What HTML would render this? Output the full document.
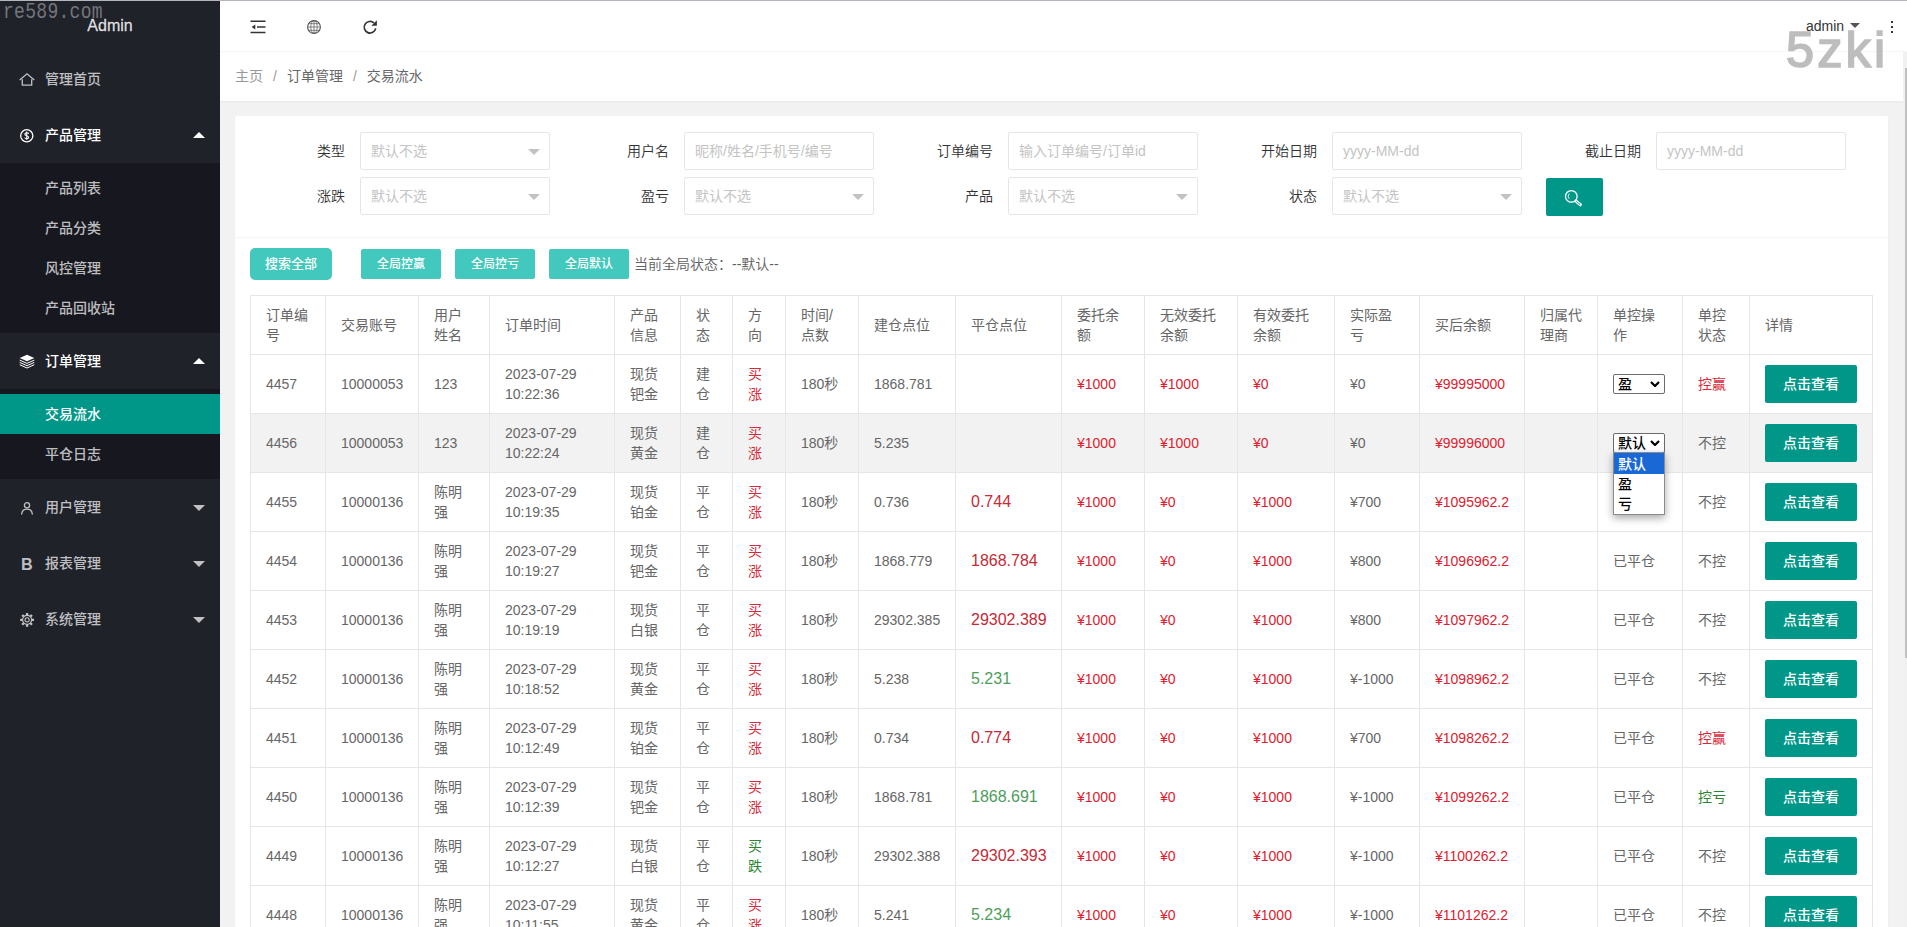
<!DOCTYPE html>
<html lang="zh-CN">
<head>
<meta charset="utf-8">
<title>交易流水</title>
<style>
*{box-sizing:border-box;margin:0;padding:0}
html,body{width:1907px;height:927px;overflow:hidden}
body{position:relative;background:#f2f2f2;color:#666;font:14px/20px "Liberation Sans","Noto Sans CJK SC",sans-serif;}
a{color:inherit;text-decoration:none}
ul{list-style:none}
.abs{position:absolute}
/* browser top hairline */
#topline{left:0;top:0;width:1907px;height:1px;background:#b4b5bd;z-index:50}
/* ---------- sidebar ---------- */
#side{left:0;top:1px;width:220px;height:926px;background:#20222a;color:rgba(255,255,255,.72);z-index:10;font-weight:500}
#logo{left:0;top:0;width:220px;height:50px;line-height:50px;text-align:center;font-size:16px;color:rgba(255,255,255,.85);-webkit-text-stroke:.300px rgba(255,255,255,.7)}
.nav-item{position:absolute;left:0;width:220px;height:56px;line-height:56px;padding-left:45px;font-size:14px}
.nav-item.open{color:#fff}
.nav-item svg.ic{position:absolute;left:19px;top:21px;width:16px;height:16px;overflow:visible}
.nav-item i.more{position:absolute;right:15px;top:26px;width:0;height:0;border:6px solid transparent;border-top-color:rgba(255,255,255,.72)}
.nav-item.open i.more{top:19px;border-top-color:transparent;border-bottom-color:#fff}
.nav-child{position:absolute;left:0;width:220px;background:#17181f;padding:5px 0}
.nav-child a{display:block;height:40px;line-height:40px;padding-left:45px;color:rgba(255,255,255,.72)}
.nav-child a.this{background:#009688;color:#fff}
/* ---------- header ---------- */
#header{left:220px;top:1px;width:1687px;height:51px;background:#fff;border-bottom:1px solid #f6f6f6;z-index:5}
#crumb{left:220px;top:51px;width:1683px;height:50px;background:#fff;line-height:50px;padding-left:15px;font-size:14px;color:#999;box-shadow:0 1px 2px 0 rgba(0,0,0,.05)}
#crumb span.sep{margin:0 10px;color:#999}
#crumb a.c{color:#666}
#crumb a.h{color:#999}
/* ---------- card ---------- */
#card{left:235px;top:116px;width:1653px;height:820px;background:#fff;border-radius:2px;box-shadow:0 1px 2px 0 rgba(0,0,0,.05)}
.lbl{position:absolute;width:110px;height:38px;line-height:38px;padding:0 15px;text-align:right;color:#333;font-size:14px;font-weight:350}
.inp{position:absolute;width:190px;height:38px;line-height:36px;border:1px solid #e6e6e6;border-radius:2px;background:#fff;padding-left:10px;color:#c4c4c4;font-size:14px}
.inp i{position:absolute;right:9px;top:16px;width:0;height:0;border:6px solid transparent;border-top-color:#c2c2c2}
#sbtn{left:1546px;top:178px;width:57px;height:38px;background:#009688;border-radius:2px}
#hr1{left:235px;top:237px;width:1653px;height:1px;background:#f6f6f6}
.b1{position:absolute;left:250px;top:248px;width:82px;height:32px;line-height:32px;border-radius:5px;background:#42c8bd;color:#fff;text-align:center;font-size:13px;font-weight:500}
.b2{position:absolute;top:249px;width:80px;height:30px;line-height:30px;border-radius:2px;background:#42c8bd;color:#fff;text-align:center;font-size:12px;font-weight:500}
#gstate{left:634px;top:249px;height:30px;line-height:30px;font-size:14px;color:#606060;font-weight:350}
/* ---------- table ---------- */
#tb{left:250px;top:295px;width:1623px;table-layout:fixed;border-collapse:separate;border-spacing:0;border-left:1px solid #e6e6e6;border-top:1px solid #e6e6e6;background:#fff;color:#666;font-size:14px;line-height:20px}
#tb th,#tb td{height:59px;padding:9px 15px;border-right:1px solid #e6e6e6;border-bottom:1px solid #e6e6e6;text-align:left;font-weight:400;vertical-align:middle;word-break:normal;overflow:visible}
#tb tr.hov td{background:#f2f2f2}
#tb .tr{color:#d62a38}
#tb .tg{color:#2a8430}
#tb .m{color:#e0202e}
#tb .pr{color:#c62a36;font-size:16px}
#tb .pg{color:#4d9e5c;font-size:16px}
.vbtn{display:inline-block;vertical-align:middle;width:92px;height:38px;line-height:38px;background:#009688;color:#fff;text-align:center;border-radius:2px;font-size:14px;font-weight:500}
.sel{display:inline-block;position:relative;top:-1px;vertical-align:middle;width:52px;height:20px;line-height:18px;border:1px solid #6b6b6b;border-radius:2px;background:#fff;color:#000;font-size:14px;font-weight:500;padding-left:4px}
.sel svg{position:absolute;right:4px;top:6px;width:10px;height:6px;fill:none;stroke:#000;stroke-width:2.200}
#dd{left:1613px;top:452px;width:52px;height:63px;background:#fff;border:1px solid #8c8c8c;box-shadow:0 3px 8px rgba(0,0,0,.35);color:#000;font-size:14px;font-weight:500;line-height:21px;z-index:20}
#dd div{height:20px;padding-left:4px}
#dd div.on{height:21px;line-height:22px;background:#1a68d6;color:#fff}
/* ---------- scrollbar + watermarks ---------- */
#sbar{left:1903px;top:52px;width:4px;height:875px;background:#f1f1f1}
#sthumb{left:1905px;top:68px;width:2px;height:590px;background:#c1c1c1}
#wm1{left:3px;top:-3px;font:18px/24px "Liberation Mono",monospace;color:#75767b;letter-spacing:.300px;z-index:30;transform:scaleY(1.220);transform-origin:left top}
#wm2{left:1786px;top:20px;font:normal 50.500px/60px "Liberation Sans",sans-serif;color:#bdbdbd;-webkit-text-stroke:1.700px #bdbdbd;z-index:40;letter-spacing:3.100px}
</style>
</head>
<body>
<div id="topline" class="abs"></div>

<!-- ================= SIDEBAR ================= -->
<div id="side" class="abs">
  <div id="logo" class="abs">Admin</div>

  <div class="nav-item" style="top:50px">
    <svg class="ic" viewBox="0 0 16 16" fill="none" stroke="currentColor" stroke-width="1.300" stroke-linejoin="miter" stroke-linecap="butt"><path d="M.7 8.100 8 1.800l7.300 6.300"/><path d="M3.300 7.200v5.900h9.400V7.200"/></svg>管理首页</div>

  <div class="nav-item open" style="top:106px">
    <svg class="ic" viewBox="0 0 16 16" fill="none" stroke="currentColor" stroke-width="1.300"><circle cx="7.750" cy="7.750" r="6.100"/><path d="M9.700 5.800C9.400 5.100 8.700 4.800 7.750 4.800c-1.150 0-1.900.600-1.900 1.400 0 1.900 3.800 1.100 3.800 3.100 0 .900-.750 1.450-1.900 1.450-1.050 0-1.800-.400-2.100-1.150M7.750 3.600v8.300" stroke-width="1.100"/></svg>产品管理<i class="more"></i></div>
  <div class="nav-child" style="top:162px">
    <a>产品列表</a><a>产品分类</a><a>风控管理</a><a>产品回收站</a>
  </div>

  <div class="nav-item open" style="top:332px">
    <svg class="ic" viewBox="0 0 16 16" fill="none" stroke="currentColor" stroke-width="1" stroke-linejoin="miter"><path d="M8 .700 15.300 4 8 7.300.700 4z" fill="currentColor" stroke="none"/><path d="M.700 6.100 8 9.400l7.300-3.300M.700 8.400 8 11.700l7.300-3.300M.700 10.700 8 14l7.300-3.300"/></svg>订单管理<i class="more"></i></div>
  <div class="nav-child" style="top:388px">
    <a class="this">交易流水</a><a>平仓日志</a>
  </div>

  <div class="nav-item" style="top:478px">
    <svg class="ic" viewBox="0 0 16 16" fill="none" stroke="currentColor" stroke-width="1.300" stroke-linecap="round"><circle cx="8" cy="5.300" r="2.600"/><path d="M2.700 14c.300-3 2.400-4.900 5.300-4.900s5 1.900 5.300 4.900"/></svg>用户管理<i class="more"></i></div>

  <div class="nav-item" style="top:534px">
    <svg class="ic" viewBox="0 0 16 16"><text x="1.900" y="13.600" font-family="Liberation Sans, sans-serif" font-weight="bold" font-size="16.200" fill="currentColor">B</text></svg>报表管理<i class="more"></i></div>

  <div class="nav-item" style="top:590px">
    <svg class="ic" viewBox="0 0 16 16" fill="none" stroke="currentColor"><g transform="translate(8.100 7.850)"><circle r="2.100" stroke-width="1.100"/><circle r="4.500" stroke-width="1.100"/><g stroke-width="2.300"><path d="M0-4.900v-2M0 4.900v2M-4.900 0h-2M4.900 0h2M-3.460-3.460l-1.420-1.420M3.460 3.460l1.420 1.420M-3.460 3.460l-1.420 1.420M3.460-3.460l1.420-1.420"/></g></g></svg>系统管理<i class="more"></i></div>
</div>

<!-- ================= HEADER ================= -->
<div id="header" class="abs">
  <!-- flexible / shrink icon -->
  <svg class="abs" style="left:30px;top:18px;width:16px;height:16px" viewBox="0 0 16 16" fill="none" stroke="#333" stroke-width="1.500"><path d="M.5 2.200h15M7 7.900h8.500M.5 13.600h15"/><path d="M5.300 5.400v5L1.600 7.900z" fill="#333" stroke="none"/></svg>
  <!-- globe -->
  <svg class="abs" style="left:86px;top:18px;width:16px;height:16px" viewBox="0 0 16 16" fill="none" stroke="#555" stroke-width=".700"><circle cx="8" cy="8" r="6.400" stroke-width="1.100"/><ellipse cx="8" cy="8" rx="3.200" ry="6.400"/><path d="M8 1.600v12.800M1.600 8h12.800M2.600 4.700h10.800M2.600 11.300h10.800"/></svg>
  <!-- refresh -->
  <svg class="abs" style="left:142px;top:18px;width:16px;height:16px" viewBox="0 0 16 16" fill="none" stroke="#333" stroke-width="1.700"><path d="M13.700 9.400A5.800 5.800 0 1 1 11.900 3.900"/><path d="M14.900 1.200v5.600H9.300z" fill="#333" stroke="none"/></svg>
  <div class="abs" style="left:1586px;top:0;height:50px;line-height:50px;font-size:14px;color:#333">admin</div>
  <i class="abs" style="left:1630px;top:22px;width:0;height:0;border:5.500px solid transparent;border-top-color:#555"></i>
  <div class="abs" style="left:1671px;top:20px;width:2px;height:2px;background:#333;box-shadow:0 5px 0 #333,0 10px 0 #333"></div>
</div>

<div id="crumb" class="abs"><a class="h">主页</a><span class="sep">/</span><a class="c">订单管理</a><span class="sep">/</span><a class="c">交易流水</a></div>

<!-- ================= CARD ================= -->
<div id="card" class="abs"></div>
<div id="hr1" class="abs"></div>

<div class="lbl" style="left:250px;top:132px">类型</div><div class="inp" style="left:360px;top:132px">默认不选<i></i></div>
<div class="lbl" style="left:574px;top:132px">用户名</div><div class="inp" style="left:684px;top:132px">昵称/姓名/手机号/编号</div>
<div class="lbl" style="left:898px;top:132px">订单编号</div><div class="inp" style="left:1008px;top:132px">输入订单编号/订单id</div>
<div class="lbl" style="left:1222px;top:132px">开始日期</div><div class="inp" style="left:1332px;top:132px">yyyy-MM-dd</div>
<div class="lbl" style="left:1546px;top:132px">截止日期</div><div class="inp" style="left:1656px;top:132px">yyyy-MM-dd</div>

<div class="lbl" style="left:250px;top:177px">涨跌</div><div class="inp" style="left:360px;top:177px">默认不选<i></i></div>
<div class="lbl" style="left:574px;top:177px">盈亏</div><div class="inp" style="left:684px;top:177px">默认不选<i></i></div>
<div class="lbl" style="left:898px;top:177px">产品</div><div class="inp" style="left:1008px;top:177px">默认不选<i></i></div>
<div class="lbl" style="left:1222px;top:177px">状态</div><div class="inp" style="left:1332px;top:177px">默认不选<i></i></div>
<div id="sbtn" class="abs"><svg class="abs" style="left:0;top:0;width:57px;height:38px" viewBox="0 0 57 38" fill="none" stroke="#fff" stroke-linecap="round"><circle cx="25.300" cy="18.400" r="5.800" stroke-width="1.300"/><path d="M30.300 23.400l4 3.400" stroke-width="3.200"/><path d="M30.500 23.600l3.600 3" stroke="#009688" stroke-width=".900"/><path d="M23 15.900a3.400 3.400 0 0 0 0 4.600" stroke-width=".900"/></svg></div>

<div class="b1">搜索全部</div>
<div class="b2" style="left:361px">全局控赢</div>
<div class="b2" style="left:455px">全局控亏</div>
<div class="b2" style="left:549px">全局默认</div>
<div id="gstate" class="abs">当前全局状态：--默认--</div>

<!--TABLE-START-->
<table id="tb" class="abs">
<colgroup><col style="width:75px"><col style="width:93px"><col style="width:71px"><col style="width:125px"><col style="width:66px"><col style="width:52px"><col style="width:53px"><col style="width:73px"><col style="width:97px"><col style="width:106px"><col style="width:83px"><col style="width:93px"><col style="width:97px"><col style="width:85px"><col style="width:105px"><col style="width:73px"><col style="width:85px"><col style="width:67px"><col style="width:123px"></colgroup>
<thead><tr><th>订单编号</th><th>交易账号</th><th>用户姓名</th><th>订单时间</th><th>产品信息</th><th>状态</th><th>方向</th><th>时间/点数</th><th>建仓点位</th><th>平仓点位</th><th>委托余额</th><th>无效委托余额</th><th>有效委托余额</th><th>实际盈亏</th><th>买后余额</th><th>归属代理商</th><th>单控操作</th><th>单控状态</th><th>详情</th></tr></thead>
<tbody>
<tr><td>4457</td><td>10000053</td><td>123</td><td>2023-07-29 10:22:36</td><td>现货钯金</td><td>建仓</td><td class="tr">买涨</td><td>180秒</td><td>1868.781</td><td></td><td class="m">¥1000</td><td class="m">¥1000</td><td class="m">¥0</td><td>¥0</td><td class="m">¥99995000</td><td></td><td><span class="sel">盈<svg viewBox="0 0 10 6"><path d="M1 1l4 4 4-4"/></svg></span></td><td class="tr">控赢</td><td><a class="vbtn">点击查看</a></td></tr>
<tr class="hov"><td>4456</td><td>10000053</td><td>123</td><td>2023-07-29 10:22:24</td><td>现货黄金</td><td>建仓</td><td class="tr">买涨</td><td>180秒</td><td>5.235</td><td></td><td class="m">¥1000</td><td class="m">¥1000</td><td class="m">¥0</td><td>¥0</td><td class="m">¥99996000</td><td></td><td><span class="sel">默认<svg viewBox="0 0 10 6"><path d="M1 1l4 4 4-4"/></svg></span></td><td>不控</td><td><a class="vbtn">点击查看</a></td></tr>
<tr><td>4455</td><td>10000136</td><td>陈明强</td><td>2023-07-29 10:19:35</td><td>现货铂金</td><td>平仓</td><td class="tr">买涨</td><td>180秒</td><td>0.736</td><td><span class="pr">0.744</span></td><td class="m">¥1000</td><td class="m">¥0</td><td class="m">¥1000</td><td>¥700</td><td class="m">¥1095962.2</td><td></td><td>已平仓</td><td>不控</td><td><a class="vbtn">点击查看</a></td></tr>
<tr><td>4454</td><td>10000136</td><td>陈明强</td><td>2023-07-29 10:19:27</td><td>现货钯金</td><td>平仓</td><td class="tr">买涨</td><td>180秒</td><td>1868.779</td><td><span class="pr">1868.784</span></td><td class="m">¥1000</td><td class="m">¥0</td><td class="m">¥1000</td><td>¥800</td><td class="m">¥1096962.2</td><td></td><td>已平仓</td><td>不控</td><td><a class="vbtn">点击查看</a></td></tr>
<tr><td>4453</td><td>10000136</td><td>陈明强</td><td>2023-07-29 10:19:19</td><td>现货白银</td><td>平仓</td><td class="tr">买涨</td><td>180秒</td><td>29302.385</td><td><span class="pr">29302.389</span></td><td class="m">¥1000</td><td class="m">¥0</td><td class="m">¥1000</td><td>¥800</td><td class="m">¥1097962.2</td><td></td><td>已平仓</td><td>不控</td><td><a class="vbtn">点击查看</a></td></tr>
<tr><td>4452</td><td>10000136</td><td>陈明强</td><td>2023-07-29 10:18:52</td><td>现货黄金</td><td>平仓</td><td class="tr">买涨</td><td>180秒</td><td>5.238</td><td><span class="pg">5.231</span></td><td class="m">¥1000</td><td class="m">¥0</td><td class="m">¥1000</td><td>¥-1000</td><td class="m">¥1098962.2</td><td></td><td>已平仓</td><td>不控</td><td><a class="vbtn">点击查看</a></td></tr>
<tr><td>4451</td><td>10000136</td><td>陈明强</td><td>2023-07-29 10:12:49</td><td>现货铂金</td><td>平仓</td><td class="tr">买涨</td><td>180秒</td><td>0.734</td><td><span class="pr">0.774</span></td><td class="m">¥1000</td><td class="m">¥0</td><td class="m">¥1000</td><td>¥700</td><td class="m">¥1098262.2</td><td></td><td>已平仓</td><td class="tr">控赢</td><td><a class="vbtn">点击查看</a></td></tr>
<tr><td>4450</td><td>10000136</td><td>陈明强</td><td>2023-07-29 10:12:39</td><td>现货钯金</td><td>平仓</td><td class="tr">买涨</td><td>180秒</td><td>1868.781</td><td><span class="pg">1868.691</span></td><td class="m">¥1000</td><td class="m">¥0</td><td class="m">¥1000</td><td>¥-1000</td><td class="m">¥1099262.2</td><td></td><td>已平仓</td><td class="tg">控亏</td><td><a class="vbtn">点击查看</a></td></tr>
<tr><td>4449</td><td>10000136</td><td>陈明强</td><td>2023-07-29 10:12:27</td><td>现货白银</td><td>平仓</td><td class="tg">买跌</td><td>180秒</td><td>29302.388</td><td><span class="pr">29302.393</span></td><td class="m">¥1000</td><td class="m">¥0</td><td class="m">¥1000</td><td>¥-1000</td><td class="m">¥1100262.2</td><td></td><td>已平仓</td><td>不控</td><td><a class="vbtn">点击查看</a></td></tr>
<tr><td>4448</td><td>10000136</td><td>陈明强</td><td>2023-07-29 10:11:55</td><td>现货黄金</td><td>平仓</td><td class="tr">买涨</td><td>180秒</td><td>5.241</td><td><span class="pg">5.234</span></td><td class="m">¥1000</td><td class="m">¥0</td><td class="m">¥1000</td><td>¥-1000</td><td class="m">¥1101262.2</td><td></td><td>已平仓</td><td>不控</td><td><a class="vbtn">点击查看</a></td></tr>
</tbody></table>
<div id="dd" class="abs"><div class="on">默认</div><div>盈</div><div>亏</div></div>
<!--TABLE-END-->

<div id="sbar" class="abs"></div><div id="sthumb" class="abs"></div>
<div id="wm1" class="abs">re589.com</div>
<div id="wm2" class="abs">5zki</div>
</body>
</html>
